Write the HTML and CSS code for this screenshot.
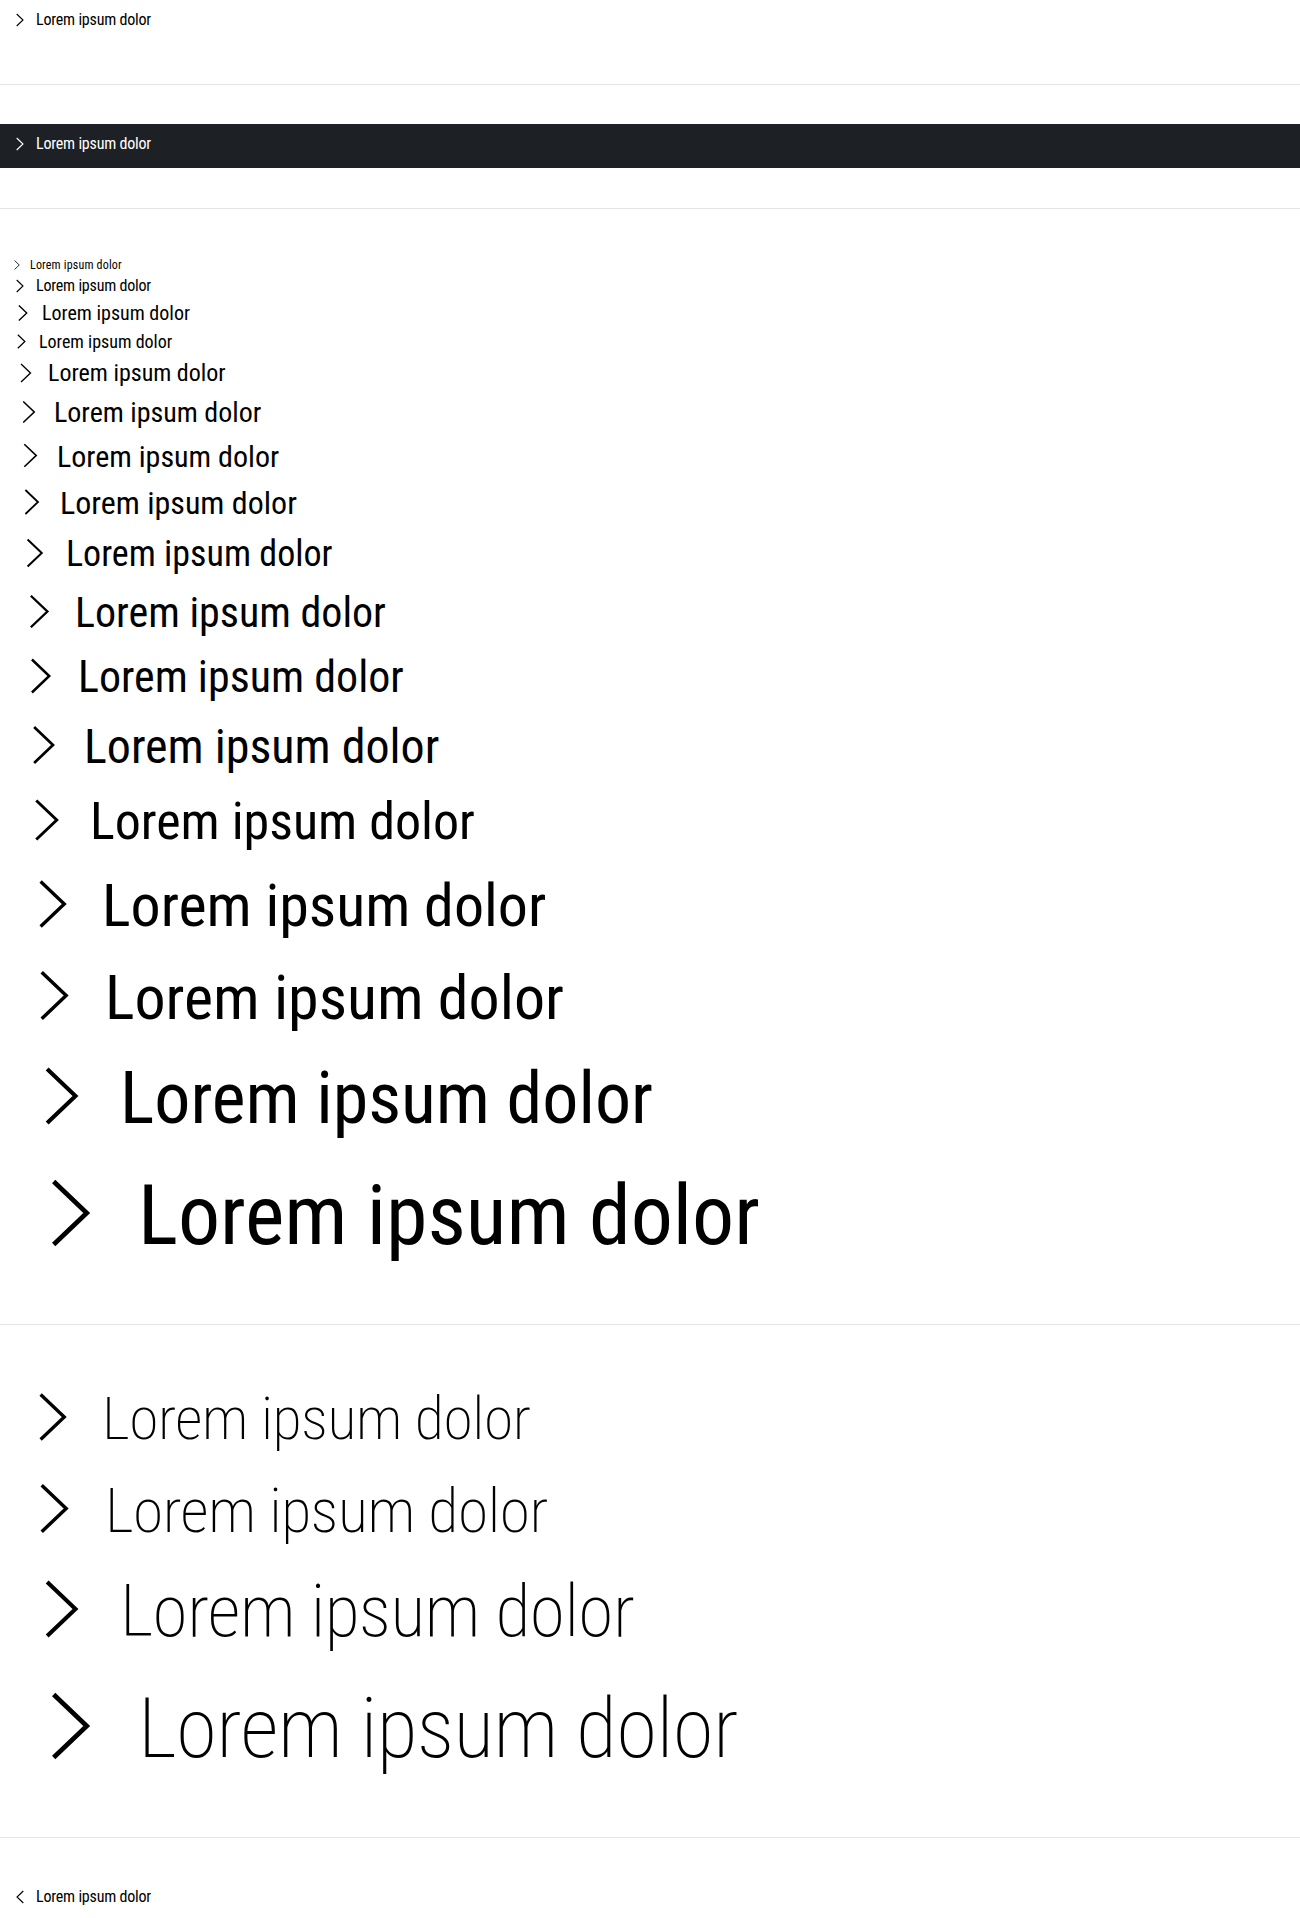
FILE: index.html
```html
<!DOCTYPE html>
<html lang="en">
<head>
<meta charset="utf-8">
<title>Link Pure</title>
<link rel="stylesheet" href="styles.css">
</head>
<body>
<section class="block block--single">
  <a class="link" href="#"><svg class="icon" viewBox="0 0 24 24"><path d="M8.7 6 15 12 8.7 18"/></svg><span class="label">Lorem ipsum dolor</span></a>
</section>
<hr class="divider">
<section class="block block--single block--dark">
  <a class="link link--dark" href="#"><svg class="icon" viewBox="0 0 24 24"><path d="M8.7 6 15 12 8.7 18"/></svg><span class="label">Lorem ipsum dolor</span></a>
</section>
<hr class="divider">
<section class="block stack">
  <a class="link s12" href="#"><svg class="icon" viewBox="0 0 24 24"><path d="M8.7 6 15 12 8.7 18"/></svg><span class="label">Lorem ipsum dolor</span></a>
  <a class="link s16" href="#"><svg class="icon" viewBox="0 0 24 24"><path d="M8.7 6 15 12 8.7 18"/></svg><span class="label">Lorem ipsum dolor</span></a>
  <a class="link s20" href="#"><svg class="icon" viewBox="0 0 24 24"><path d="M8.7 6 15 12 8.7 18"/></svg><span class="label">Lorem ipsum dolor</span></a>
  <a class="link s18" href="#"><svg class="icon" viewBox="0 0 24 24"><path d="M8.7 6 15 12 8.7 18"/></svg><span class="label">Lorem ipsum dolor</span></a>
  <a class="link s24" href="#"><svg class="icon" viewBox="0 0 24 24"><path d="M8.7 6 15 12 8.7 18"/></svg><span class="label">Lorem ipsum dolor</span></a>
  <a class="link s28" href="#"><svg class="icon" viewBox="0 0 24 24"><path d="M8.7 6 15 12 8.7 18"/></svg><span class="label">Lorem ipsum dolor</span></a>
  <a class="link s30" href="#"><svg class="icon" viewBox="0 0 24 24"><path d="M8.7 6 15 12 8.7 18"/></svg><span class="label">Lorem ipsum dolor</span></a>
  <a class="link s32" href="#"><svg class="icon" viewBox="0 0 24 24"><path d="M8.7 6 15 12 8.7 18"/></svg><span class="label">Lorem ipsum dolor</span></a>
  <a class="link s36" href="#"><svg class="icon" viewBox="0 0 24 24"><path d="M8.7 6 15 12 8.7 18"/></svg><span class="label">Lorem ipsum dolor</span></a>
  <a class="link s42" href="#"><svg class="icon" viewBox="0 0 24 24"><path d="M8.7 6 15 12 8.7 18"/></svg><span class="label">Lorem ipsum dolor</span></a>
  <a class="link s44" href="#"><svg class="icon" viewBox="0 0 24 24"><path d="M8.7 6 15 12 8.7 18"/></svg><span class="label">Lorem ipsum dolor</span></a>
  <a class="link s48" href="#"><svg class="icon" viewBox="0 0 24 24"><path d="M8.7 6 15 12 8.7 18"/></svg><span class="label">Lorem ipsum dolor</span></a>
  <a class="link s52" href="#"><svg class="icon" viewBox="0 0 24 24"><path d="M8.7 6 15 12 8.7 18"/></svg><span class="label">Lorem ipsum dolor</span></a>
  <a class="link s60" href="#"><svg class="icon" viewBox="0 0 24 24"><path d="M8.7 6 15 12 8.7 18"/></svg><span class="label">Lorem ipsum dolor</span></a>
  <a class="link s62" href="#"><svg class="icon" viewBox="0 0 24 24"><path d="M8.7 6 15 12 8.7 18"/></svg><span class="label">Lorem ipsum dolor</span></a>
  <a class="link s72" href="#"><svg class="icon" viewBox="0 0 24 24"><path d="M8.7 6 15 12 8.7 18"/></svg><span class="label">Lorem ipsum dolor</span></a>
  <a class="link s84" href="#"><svg class="icon" viewBox="0 0 24 24"><path d="M8.7 6 15 12 8.7 18"/></svg><span class="label">Lorem ipsum dolor</span></a>
</section>
<hr class="divider">
<section class="block stack stack--thin">
  <a class="link s60" href="#"><svg class="icon" viewBox="0 0 24 24"><path d="M8.7 6 15 12 8.7 18"/></svg><span class="label">Lorem ipsum dolor</span></a>
  <a class="link s62" href="#"><svg class="icon" viewBox="0 0 24 24"><path d="M8.7 6 15 12 8.7 18"/></svg><span class="label">Lorem ipsum dolor</span></a>
  <a class="link s72" href="#"><svg class="icon" viewBox="0 0 24 24"><path d="M8.7 6 15 12 8.7 18"/></svg><span class="label">Lorem ipsum dolor</span></a>
  <a class="link s84" href="#"><svg class="icon" viewBox="0 0 24 24"><path d="M8.7 6 15 12 8.7 18"/></svg><span class="label">Lorem ipsum dolor</span></a>
</section>
<hr class="divider">
<section class="block block--single">
  <a class="link" href="#"><svg class="icon" viewBox="0 0 24 24"><path d="M15.3 6 9 12 15.3 18"/></svg><span class="label">Lorem ipsum dolor</span></a>
</section>
</body>
</html>
```

FILE: styles.css
```css
html, body {
  margin: 0;
  padding: 0;
  background: #fff;
}

body {
  font-family: "Roboto Condensed", Roboto, "Liberation Sans", Arial, sans-serif;
  color: #000;
}

.block {
  padding: 8px;
}

.block--single {
  padding-bottom: 12px;
}

.block--dark {
  background: #1d2024;
}

.divider {
  border: 0;
  border-top: 1px solid #e3e4e5;
  height: 0;
  margin: 40px 0 39px;
}

.stack {
  display: flex;
  flex-direction: column;
  align-items: flex-start;
}

.link {
  display: flex;
  width: max-content;
  align-items: flex-start;
  gap: 4px;
  color: #000;
  text-decoration: none;
  font-size: 16px;
  line-height: 1.5;
}

.link--dark {
  color: #fff;
}

.icon {
  width: 1.5em;
  height: 1.5em;
  flex: none;
  fill: none;
  stroke: currentColor;
  stroke-width: 0.9;
  stroke-linejoin: miter;
}

.block--single .icon,
.s12 .icon,
.s16 .icon,
.s18 .icon,
.s20 .icon {
  stroke-width: 1.1;
}

.label {
  display: block;
  height: 1.5em;
  line-height: 1.58;
  white-space: nowrap;
}

.block--single .label,
.s16 .label {
  line-height: 1.52;
  letter-spacing: -0.0125em;
}

.s12 .label {
  line-height: 1.52;
  letter-spacing: 0.015em;
}

.stack--thin .label {
  font-weight: 200;
  letter-spacing: -0.007em;
}

.s12 { font-size: 12px; }
.s16 { font-size: 16px; }
.s18 { font-size: 18px; }
.s20 { font-size: 20px; }
.s24 { font-size: 24px; }
.s28 { font-size: 28px; }
.s30 { font-size: 30px; }
.s32 { font-size: 32px; }
.s36 { font-size: 36px; }
.s42 { font-size: 42px; }
.s44 { font-size: 44px; }
.s48 { font-size: 48px; }
.s52 { font-size: 52px; }
.s60 { font-size: 60px; }
.s62 { font-size: 62px; }
.s72 { font-size: 72px; }
.s84 { font-size: 84px; }
```
